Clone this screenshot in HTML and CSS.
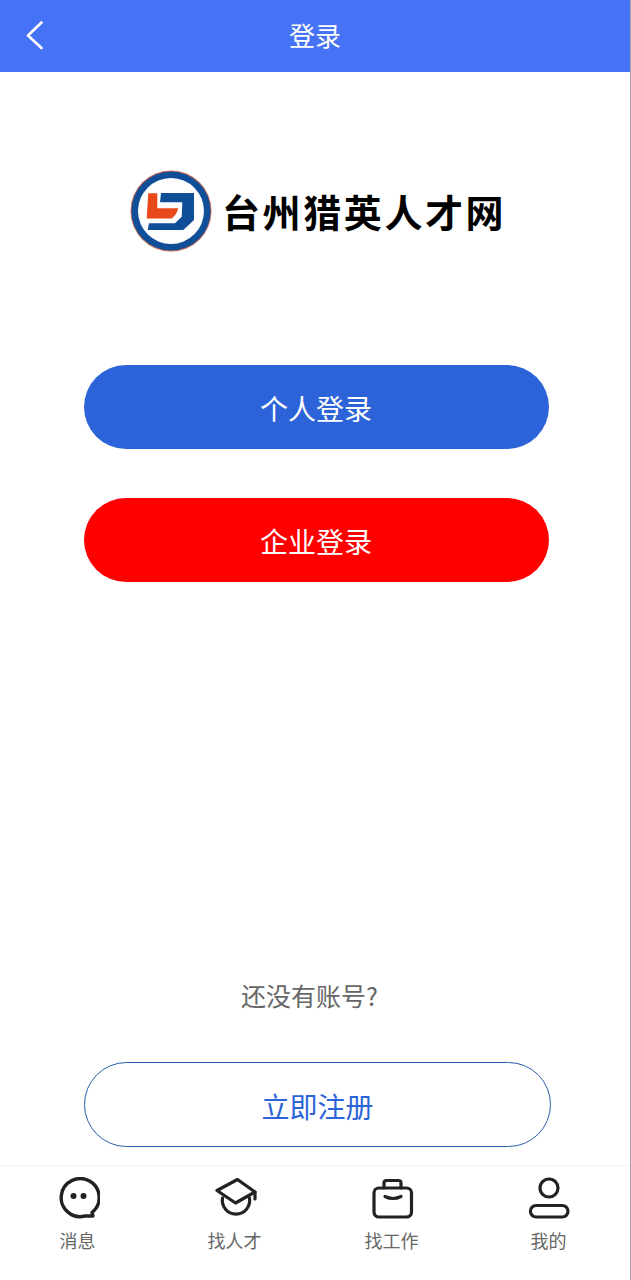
FILE: index.html
```html
<!DOCTYPE html>
<html lang="zh-CN">
<head>
    <meta charset="UTF-8">
    <meta name="viewport" content="width=device-width, initial-scale=1.0">
    <title>登录</title>
    <link rel="stylesheet" href="styles.css">
</head>
<body>
    <div class="page">
        <header class="top-bar">
            <svg class="back-icon" width="20" height="30" viewBox="0 0 20 30">
                <path d="M17.5 2.5 L4 15.5 L17.5 28" fill="none" stroke="#fff" stroke-width="2.6" stroke-linecap="round" stroke-linejoin="round"/>
            </svg>
            <span class="top-title">登录</span>
        </header>

        <div class="logo">
            <svg class="logo-mark" width="82" height="82" viewBox="0 0 82 82">
                <circle cx="41" cy="41" r="40.5" fill="#c9684f"/>
                <circle cx="41" cy="41" r="39.6" fill="#104f98"/>
                <circle cx="41" cy="41" r="33" fill="#fff"/>
                <path d="M31 23 H64 V50 L53.3 60 H17.7 L19 53.3 H45 L51.7 46.7 L52.3 32.3 H30 Z" fill="#104f98"/>
                <path d="M18.3 23.3 H27.3 V38.3 H48.5 L46 44 L42 48.5 H16.7 Z" fill="#e8481a"/>
            </svg>
            <span class="logo-text">台州猎英人才网</span>
        </div>

        <div class="login-buttons">
            <a class="btn btn-blue">个人登录</a>
            <a class="btn btn-red">企业登录</a>
        </div>

        <div class="register">
            <p class="register-tip">还没有账号?</p>
            <a class="btn-register">立即注册</a>
        </div>

        <nav class="tab-bar">
            <a class="tab">
                <svg width="44" height="44" viewBox="0 0 44 44" fill="none" stroke="#222" stroke-width="3.4" stroke-linecap="round" stroke-linejoin="round">
                    <path d="M36 35.5 A19 19 0 1 0 29 39 H37 Z"/>
                    <circle cx="17.5" cy="19" r="3" fill="#222" stroke="none"/>
                    <circle cx="27.5" cy="19" r="3" fill="#222" stroke="none"/>
                </svg>
                <span>消息</span>
            </a>
            <a class="tab">
                <svg width="44" height="44" viewBox="0 0 44 44" fill="none" stroke="#222" stroke-width="3.2" stroke-linecap="round" stroke-linejoin="round">
                    <path d="M4 13.5 L24.5 2.5 L42 15 L22.5 26 Z"/>
                    <path d="M42 15 V22"/>
                    <path d="M9.5 21 A13.7 13.7 0 1 0 36.5 21"/>
                </svg>
                <span>找人才</span>
            </a>
            <a class="tab">
                <svg width="44" height="44" viewBox="0 0 44 44" fill="none" stroke="#222" stroke-width="3.2" stroke-linecap="round" stroke-linejoin="round">
                    <rect x="4" y="11" width="37.5" height="29" rx="5"/>
                    <path d="M14 11 V6 Q14 3.5 16.5 3.5 H28.5 Q31 3.5 31 6 V11"/>
                    <path d="M15 19.5 Q23 23.5 31 19.5"/>
                </svg>
                <span>找工作</span>
            </a>
            <a class="tab">
                <svg width="44" height="44" viewBox="0 0 44 44" fill="none" stroke="#222" stroke-width="3.2">
                    <circle cx="22" cy="11" r="9"/>
                    <rect x="3.4" y="28.5" width="37.6" height="11.5" rx="5.75"/>
                </svg>
                <span>我的</span>
            </a>
        </nav>
    </div>
</body>
</html>
```

FILE: styles.css
```css
* {
    box-sizing: border-box;
}
body {
    margin: 0;
    background-color: #fff;
    font-family: "Noto Sans CJK SC", "Noto Sans", sans-serif;
}
p {
    margin: 0;
}
.page {
    display: flex;
    flex-direction: column;
    height: 1280px;
    border-right: 1px solid #aaa;
}
.top-bar {
    position: relative;
    display: flex;
    align-items: center;
    justify-content: center;
    flex-shrink: 0;
    height: 72px;
    padding-bottom: 4px;
    background-color: #4672f5;
}
.back-icon {
    position: absolute;
    left: 24px;
    top: 20px;
}
.top-title {
    color: #fff;
    font-size: 26px;
}
.logo {
    display: flex;
    align-items: center;
    height: 82px;
    margin: 98px 0 0 130px;
}
.logo-text {
    margin: 0 0 2px 10px;
    font-size: 38px;
    font-weight: 700;
    letter-spacing: 2.6px;
    color: #000;
}
.login-buttons {
    display: flex;
    flex-direction: column;
    gap: 49px;
    margin: 113px 81.5px 0 83.5px;
}
.btn {
    display: flex;
    align-items: center;
    justify-content: center;
    height: 84px;
    padding-top: 2px;
    border-radius: 42px;
    color: #fff;
    font-size: 28px;
}
.btn-blue {
    background-color: #2d63d8;
}
.btn-red {
    background-color: #ff0000;
}
.register {
    display: flex;
    flex-direction: column;
    margin: auto 79.5px 18px 83.5px;
}
.register-tip {
    margin-bottom: 48px;
    padding-right: 15px;
    text-align: center;
    font-size: 25px;
    line-height: 38px;
    color: #666;
}
.btn-register {
    display: flex;
    align-items: center;
    justify-content: center;
    height: 85px;
    padding: 2px 0 0 1px;
    border: 1px solid #2a5cab;
    border-radius: 43px;
    color: #2d63d8;
    font-size: 28px;
}
.tab-bar {
    display: grid;
    grid-template-columns: repeat(4, 157px);
    flex-shrink: 0;
    height: 115px;
    padding-left: 0;
    border-top: 1px solid #f3f3f3;
}
.tab {
    display: flex;
    flex-direction: column;
    align-items: center;
    padding: 11px 2px 0 0;
    color: #666;
    font-size: 18px;
    line-height: 26px;
}
.tab svg {
    display: block;
    margin-bottom: 6px;
}
```
